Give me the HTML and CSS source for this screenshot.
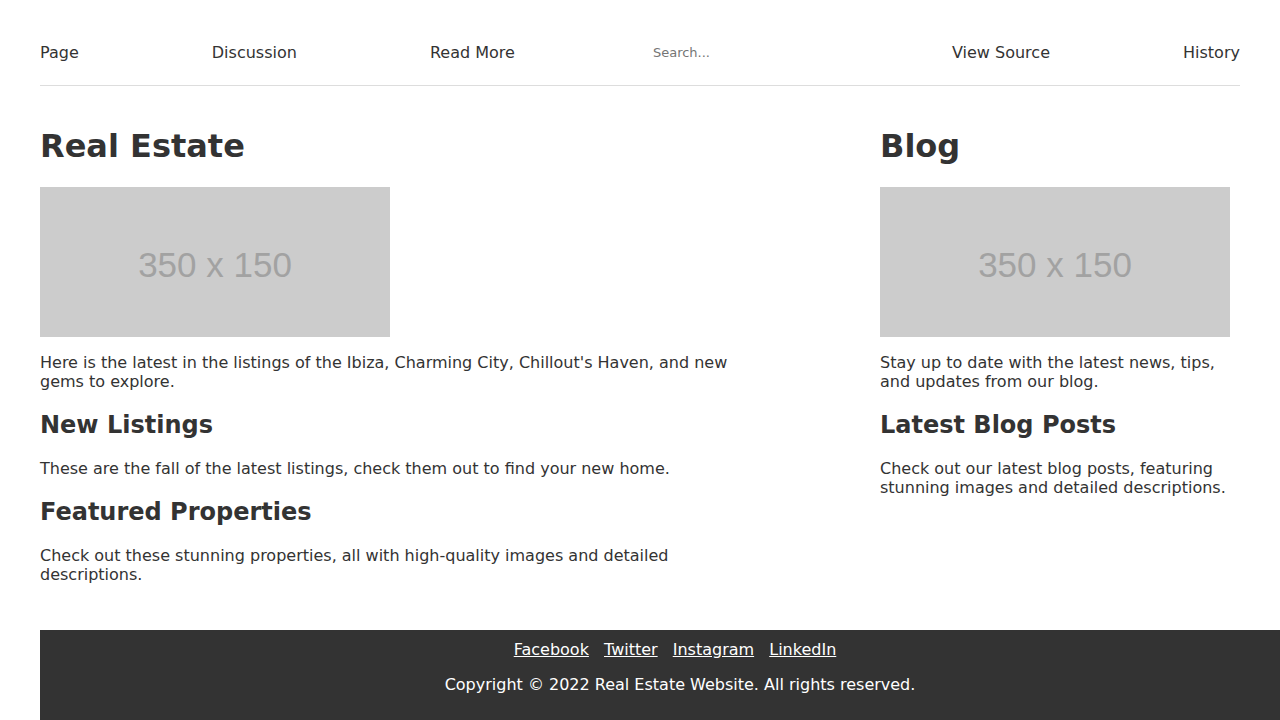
FILE: index.html
```html
<!DOCTYPE html>
<html lang="en">
<head>
<meta charset="utf-8">
<title>Real Estate</title>
<link rel="stylesheet" href="styles.css">
</head>
<body>
<div class="page">
  <nav class="nav">
    <a href="#" class="nav-link">Page</a>
    <a href="#" class="nav-link">Discussion</a>
    <a href="#" class="nav-link">Read More</a>
    <input type="text" class="search" placeholder="Search...">
    <a href="#" class="nav-link">View Source</a>
    <a href="#" class="nav-link">History</a>
  </nav>
  <main class="main">
    <section class="col col-main">
      <h1>Real Estate</h1>
      <div class="placeholder">350 x 150</div>
      <p>Here is the latest in the listings of the Ibiza, Charming City, Chillout's Haven, and new gems to explore.</p>
      <h2>New Listings</h2>
      <p>These are the fall of the latest listings, check them out to find your new home.</p>
      <h2>Featured Properties</h2>
      <p>Check out these stunning properties, all with high-quality images and detailed descriptions.</p>
    </section>
    <aside class="col col-side">
      <h1>Blog</h1>
      <div class="placeholder">350 x 150</div>
      <p>Stay up to date with the latest news, tips, and updates from our blog.</p>
      <h2>Latest Blog Posts</h2>
      <p>Check out our latest blog posts, featuring stunning images and detailed descriptions.</p>
    </aside>
  </main>
  <footer class="footer">
    <div class="social">
      <a href="#">Facebook</a> <a href="#">Twitter</a> <a href="#">Instagram</a> <a href="#">LinkedIn</a>
    </div>
    <p class="copy">Copyright © 2022 Real Estate Website. All rights reserved.</p>
  </footer>
</div>
</body>
</html>
```

FILE: styles.css
```css
html, body {
  margin: 0;
  padding: 0;
  background: #fff;
}

body {
  font-family: "DejaVu Sans", Verdana, sans-serif;
  font-size: 16px;
  color: #333;
  overflow-x: hidden;
}

.page {
  padding: 20px 40px 0;
}

.nav {
  display: flex;
  justify-content: space-between;
  align-items: center;
  padding: 20px 0;
  border-bottom: 1px solid #ddd;
}

.nav-link {
  color: #333;
  text-decoration: none;
  line-height: 19px;
}

.search {
  box-sizing: border-box;
  width: 171px;
  height: 25px;
  padding: 4px 5px;
  border: none;
  outline: none;
  font-family: "DejaVu Sans", Verdana, sans-serif;
  font-size: 13px;
  color: #333;
  background: transparent;
}

.search::placeholder {
  color: #757575;
}

.main {
  display: flex;
  justify-content: space-between;
  padding: 20px 0 30px;
}

.col-main {
  width: 720px;
}

.col-side {
  width: 360px;
}

h1 {
  font-size: 32px;
  margin: 21.44px 0;
}

h2 {
  font-size: 24px;
  margin: 19.92px 0;
}

p {
  margin: 16px 0;
}

.placeholder {
  width: 350px;
  height: 150px;
  background: #ccc;
  color: #a2a2a2;
  font-family: "Liberation Sans", Arial, sans-serif;
  font-size: 35px;
  display: flex;
  align-items: center;
  justify-content: center;
  padding-top: 6px;
  box-sizing: border-box;
}

.footer {
  margin-right: -40px;
  padding: 10px 20px 20px 60px;
  background: #333;
  color: #fff;
  text-align: center;
}

.social a {
  color: #fff;
  margin-right: 10px;
}

.copy {
  margin: 16px 0;
}
```
